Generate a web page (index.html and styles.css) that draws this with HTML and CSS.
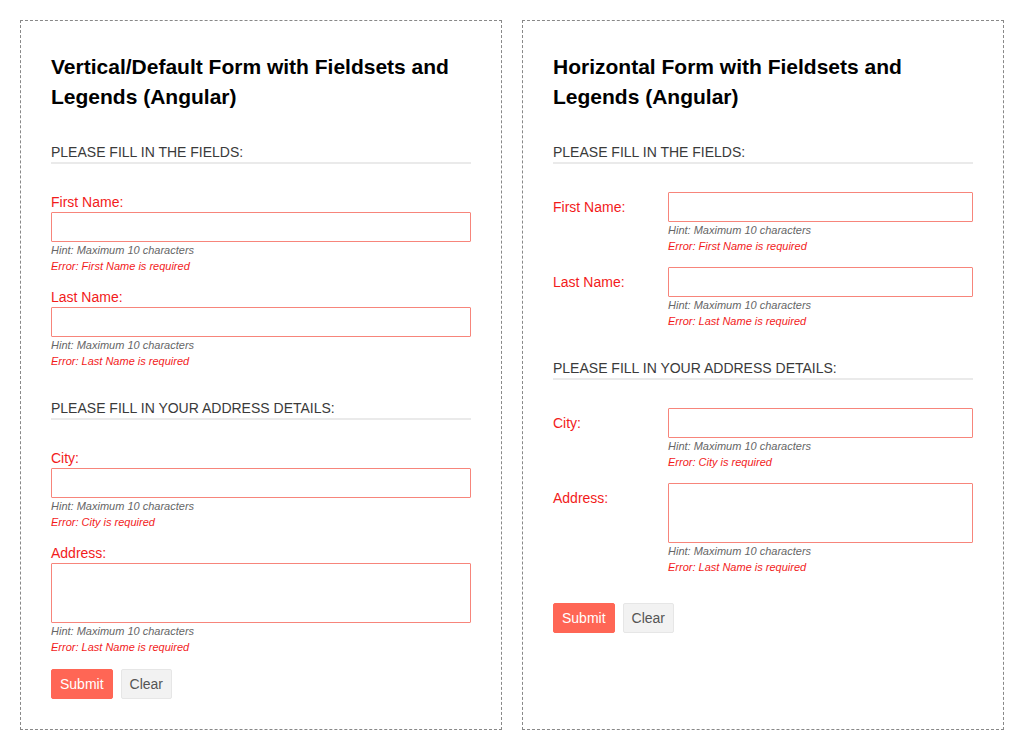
FILE: index.html
```html
<!DOCTYPE html>
<html>
<head>
<meta charset="utf-8">
<link rel="stylesheet" href="styles.css">
</head>
<body>
<div class="page">
  <div class="panel">
    <h3 class="title">Vertical/Default Form with Fieldsets and Legends (Angular)</h3>
    <form class="form">
      <fieldset class="fs">
        <legend class="legend">Please fill in the fields:</legend>
        <div class="group">
          <label class="label">First Name:</label>
          <div class="field">
            <input class="input" type="text">
            <div class="hint">Hint: Maximum 10 characters</div>
            <div class="error">Error: First Name is required</div>
          </div>
        </div>
        <div class="group">
          <label class="label">Last Name:</label>
          <div class="field">
            <input class="input" type="text">
            <div class="hint">Hint: Maximum 10 characters</div>
            <div class="error">Error: Last Name is required</div>
          </div>
        </div>
      </fieldset>
      <fieldset class="fs">
        <legend class="legend">Please fill in your address details:</legend>
        <div class="group">
          <label class="label">City:</label>
          <div class="field">
            <input class="input" type="text">
            <div class="hint">Hint: Maximum 10 characters</div>
            <div class="error">Error: City is required</div>
          </div>
        </div>
        <div class="group">
          <label class="label">Address:</label>
          <div class="field">
            <textarea class="input area"></textarea>
            <div class="hint">Hint: Maximum 10 characters</div>
            <div class="error">Error: Last Name is required</div>
          </div>
        </div>
      </fieldset>
      <div class="actions">
        <button type="button" class="btn btn-submit">Submit</button>
        <button type="button" class="btn btn-clear">Clear</button>
      </div>
    </form>
  </div>

  <div class="panel">
    <h3 class="title">Horizontal Form with Fieldsets and Legends (Angular)</h3>
    <form class="form horizontal">
      <fieldset class="fs">
        <legend class="legend">Please fill in the fields:</legend>
        <div class="group">
          <label class="label">First Name:</label>
          <div class="field">
            <input class="input" type="text">
            <div class="hint">Hint: Maximum 10 characters</div>
            <div class="error">Error: First Name is required</div>
          </div>
        </div>
        <div class="group">
          <label class="label">Last Name:</label>
          <div class="field">
            <input class="input" type="text">
            <div class="hint">Hint: Maximum 10 characters</div>
            <div class="error">Error: Last Name is required</div>
          </div>
        </div>
      </fieldset>
      <fieldset class="fs">
        <legend class="legend">Please fill in your address details:</legend>
        <div class="group">
          <label class="label">City:</label>
          <div class="field">
            <input class="input" type="text">
            <div class="hint">Hint: Maximum 10 characters</div>
            <div class="error">Error: City is required</div>
          </div>
        </div>
        <div class="group">
          <label class="label">Address:</label>
          <div class="field">
            <textarea class="input area"></textarea>
            <div class="hint">Hint: Maximum 10 characters</div>
            <div class="error">Error: Last Name is required</div>
          </div>
        </div>
      </fieldset>
      <div class="actions">
        <button type="button" class="btn btn-submit">Submit</button>
        <button type="button" class="btn btn-clear">Clear</button>
      </div>
    </form>
  </div>
</div>
</body>
</html>
```

FILE: styles.css
```css
* { box-sizing: border-box; }
html, body { margin: 0; padding: 0; background: #fff; }
body {
  font-family: "Liberation Sans", Arial, sans-serif;
  font-size: 14px;
  color: #333;
}
.page {
  display: flex;
  gap: 20px;
  padding: 20px 20px 0 20px;
}
.panel {
  width: 482px;
  height: 710px;
  border: 1px dashed #888;
  padding: 31px 30px 30px 30px;
}
.title {
  margin: 0 0 30px 0;
  font-size: 21px;
  line-height: 30px;
  font-weight: bold;
  color: #000;
}
.form { margin: 0; }
.fs {
  margin: 16px 0 0 0;
  padding: 0;
  border: 0;
  min-width: 0;
}
.legend {
  display: block;
  width: 100%;
  padding: 0;
  margin: 0 0 28px 0;
  font-size: 14px;
  line-height: 20px;
  text-transform: uppercase;
  color: #3a3a3a;
  border-bottom: 2px solid #eaeaea;
}
.group {
  margin-bottom: 13px;
}
.label {
  display: block;
  color: #f21b1b;
  font-size: 14px;
  line-height: 20px;
}
.input {
  display: block;
  width: 100%;
  height: 30px;
  margin: 0;
  padding: 4px 8px;
  border: 1px solid #f7857b;
  border-radius: 1px;
  background: #fff;
  font-family: inherit;
  font-size: 14px;
  outline: none;
}
.area {
  height: 60px;
  resize: none;
}
.hint, .error {
  font-size: 11px;
  line-height: 16px;
  font-style: italic;
}
.hint { color: #666; }
.error { color: #f21b1b; }

.horizontal .group {
  display: flex;
}
.horizontal .label {
  width: 115px;
  flex: none;
  padding-top: 5px;
}
.horizontal .field {
  flex: 1;
}
.actions {
  display: flex;
  gap: 8px;
  margin-top: 1px;
}
.horizontal .actions {
  margin-top: 15px;
}
.btn {
  height: 30px;
  padding: 4px 8px;
  font-family: inherit;
  font-size: 14px;
  line-height: 20px;
  border-radius: 2px;
  cursor: pointer;
}
.btn-submit {
  background: #ff6655;
  border: 1px solid #ff6655;
  color: #fff;
}
.btn-clear {
  background: #f2f2f2;
  border: 1px solid #e6e6e6;
  color: #555;
}
```
